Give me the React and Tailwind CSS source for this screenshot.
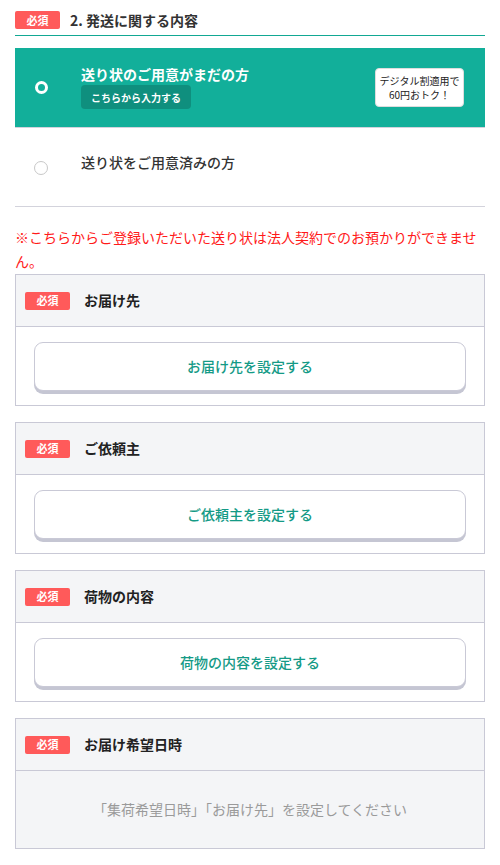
const font = { fontFamily: "'Noto Sans CJK JP', 'Noto Sans', sans-serif" }

function Required({ className = '' }) {
  return (
    <span className={`inline-flex items-center justify-center w-[45px] h-[18px] rounded-[2px] bg-[#ff5a5a] text-white text-[11px] font-bold leading-none ${className}`}>
      必須
    </span>
  )
}

function Card({ title, children, grayBody }) {
  return (
    <div className="border border-[#c9c9d6] mt-4 first:mt-0">
      <div className="h-[52px] bg-[#f4f5f7] border-b border-[#c9c9d6] flex items-center pl-[9px]">
        <Required />
        <span className="ml-[14px] text-[14px] font-bold text-[#222]">{title}</span>
      </div>
      <div className={grayBody ? 'bg-[#f4f5f7]' : 'bg-white'}>{children}</div>
    </div>
  )
}

function SetButton({ label }) {
  return (
    <div className="px-[18px] pt-[15px] pb-[14px]">
      <button className="w-full h-[49px] rounded-[9px] border border-[#c9c9d6] bg-white shadow-[0_3px_0_#c5c6d3] text-[14px] font-medium text-[#149a86]">
        {label}
      </button>
    </div>
  )
}

export default function App() {
  return (
    <div className="w-[500px] bg-white px-[15px] pt-[11px] pb-4" style={font}>
      {/* section heading */}
      <div className="flex items-center h-[18px]">
        <Required />
        <span className="ml-[10px] text-[14px] font-bold text-[#333]">2. 発送に関する内容</span>
      </div>
      <div className="mt-[6px] h-px bg-[#12a893]" />

      {/* options */}
      <div className="mt-3">
        <div className="h-[80px] bg-[#12af9a] flex items-center border-b border-[#d3d3dc]">
          <div className="w-[52px] flex justify-center">
            <span className="w-[13px] h-[13px] rounded-full border-[3px] border-white" />
          </div>
          <div className="ml-[14px] flex-1 flex flex-col items-start -mt-[2px]">
            <span className="text-[14px] font-bold text-white leading-[20px]">送り状のご用意がまだの方</span>
            <span className="mt-[1px] h-[24px] px-[10px] flex items-center rounded-[4px] bg-[#0f8f7e] text-white text-[10px] font-bold">
              こちらから入力する
            </span>
          </div>
          <div className="mr-[21px] w-[89px] h-[39px] rounded-[4px] bg-white border border-[#ddd] flex flex-col items-center justify-center text-[10px] leading-[14px] text-[#222]">
            <span>デジタル割適用で</span>
            <span>60円おトク！</span>
          </div>
        </div>
        <div className="h-[79px] flex items-center border-b border-[#d3d3dc]">
          <div className="w-[52px] flex justify-center self-start mt-[33px]">
            <span className="w-[14px] h-[14px] rounded-full border border-[#c8c8c8]" />
          </div>
          <span className="ml-[14px] -mt-[10px] text-[14px] font-medium text-[#333]">送り状をご用意済みの方</span>
        </div>
      </div>

      <p className="mt-[18px] text-[14px] leading-[24px] text-[#ff1a1a]">
        ※こちらからご登録いただいた送り状は法人契約でのお預かりができません。
      </p>

      <div className="mt-[1px]">
        <Card title="お届け先"><SetButton label="お届け先を設定する" /></Card>
        <Card title="ご依頼主"><SetButton label="ご依頼主を設定する" /></Card>
        <Card title="荷物の内容"><SetButton label="荷物の内容を設定する" /></Card>
        <Card title="お届け希望日時" grayBody>
          <div className="h-[77px] flex items-center justify-center text-[14px] text-[#9a9a9a]">
            「集荷希望日時」「お届け先」を設定してください
          </div>
        </Card>
      </div>
    </div>
  )
}
